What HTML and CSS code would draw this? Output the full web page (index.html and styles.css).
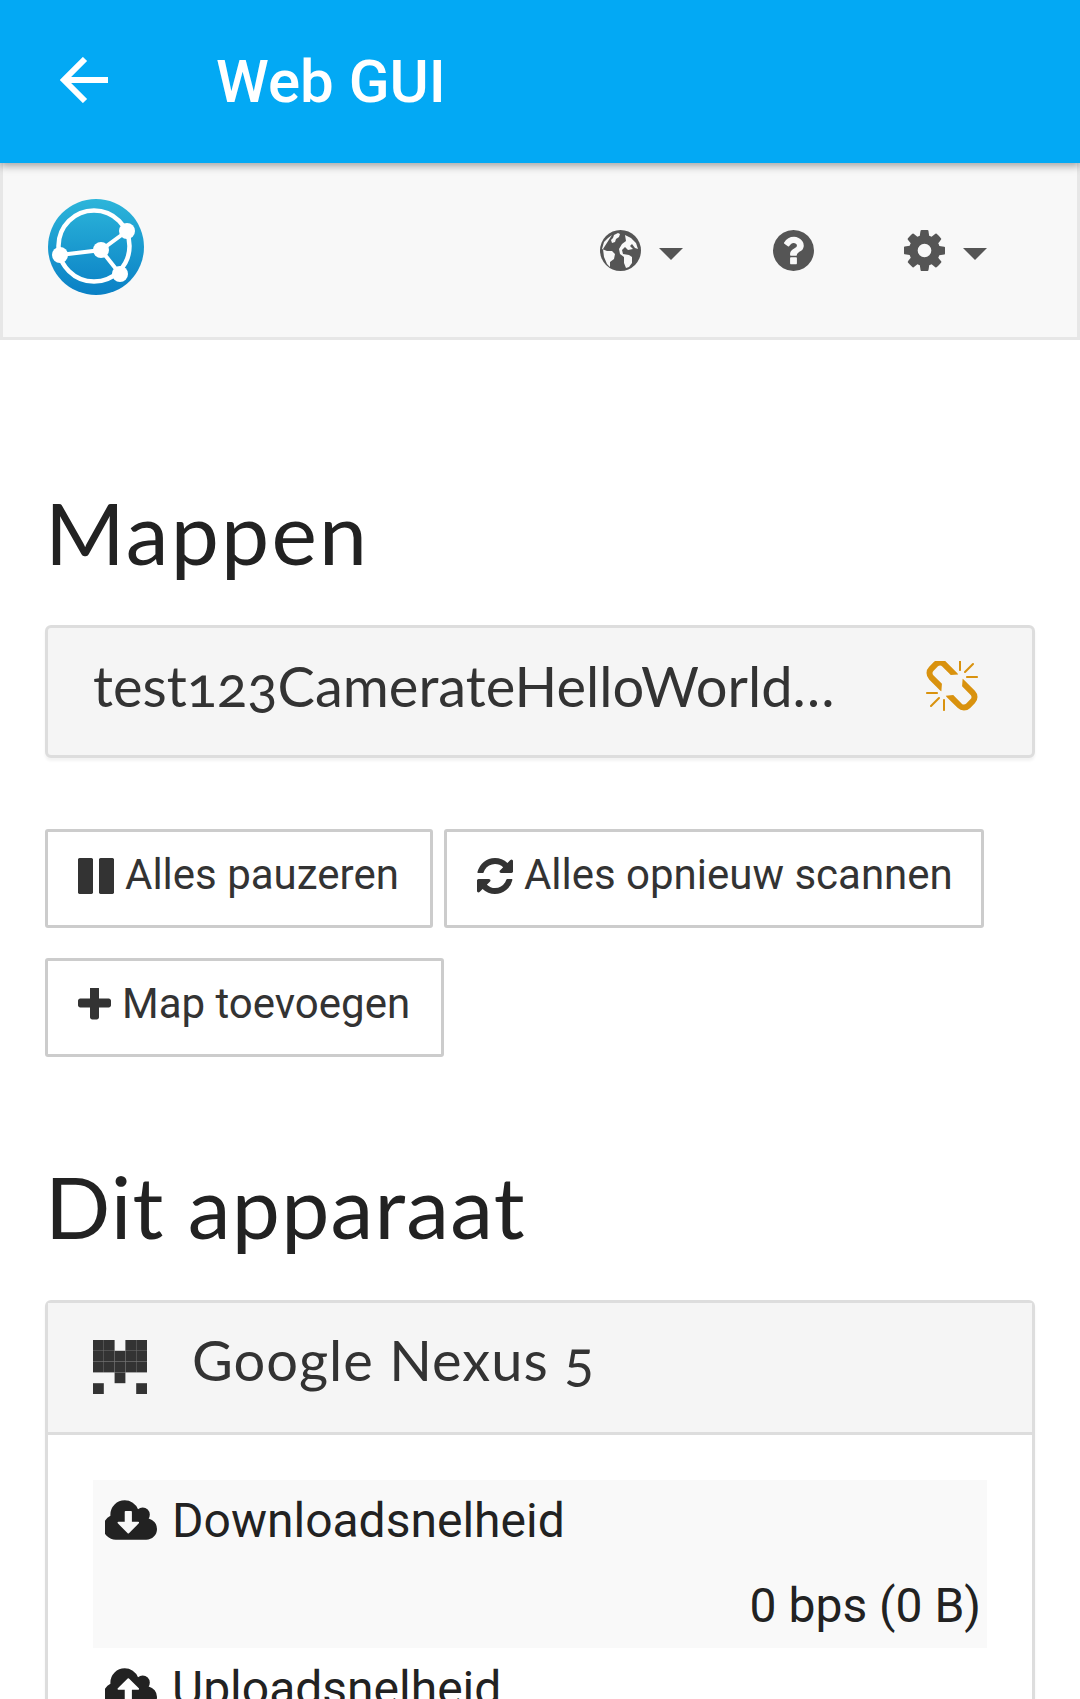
FILE: index.html
```html
<!DOCTYPE html>
<html lang="nl">
<head>
    <meta charset="UTF-8">
    <title>Web GUI</title>
    <link rel="stylesheet" href="styles.css">
</head>
<body>
    <div class="appbar">
        <svg class="back-icon" viewBox="0 0 48 46"><path d="M25 2 4 23l21 21M4 23h44" fill="none" stroke="#fff" stroke-width="6"/></svg>
        <span class="appbar-title">Web GUI</span>
    </div>

    <nav class="navbar">
        <svg class="logo" viewBox="0 0 96 96">
            <defs>
                <linearGradient id="logoFill" x1="0" y1="0" x2="0" y2="1">
                    <stop offset="0" stop-color="#2cb5da"/>
                    <stop offset="1" stop-color="#0a80c5"/>
                </linearGradient>
            </defs>
            <circle cx="48" cy="48" r="48" fill="url(#logoFill)"/>
            <circle cx="46" cy="47" r="35.500" fill="none" stroke="#fff" stroke-width="4.500"/>
            <path d="M12 56 53 51 79 32M53 51 72 75" fill="none" stroke="#fff" stroke-width="4"/>
            <circle cx="79" cy="32" r="8" fill="#fff"/>
            <circle cx="12" cy="56" r="8" fill="#fff"/>
            <circle cx="53" cy="51" r="8" fill="#fff"/>
            <circle cx="72" cy="75" r="8" fill="#fff"/>
        </svg>
        <div class="nav-items">
            <div class="nav-item globe-item">
                <svg class="nav-icon" viewBox="0 0 41 41">
                    <circle cx="20.500" cy="20.500" r="20.500" fill="#555"/>
                    <path d="M12 5 8 8 4 12 2 19l5 2h5l3 3-1 5-4 3v5l-3-3-3-7-1-8ZM14 5l4-2 2 1-1 3-3 2-1 3-3 1-1-3 2-2ZM25 5l6 3 5 5 2 6-3-1-3-4-2 2 3 3-5 1-3-3-3 3 1 4 6 1 3 2v6l-3 4-3 1-2-5v-6l-4-3-1-5 3-5 4-3Z" fill="#f8f8f8"/>
                </svg>
                <span class="caret"></span>
            </div>
            <div class="nav-item help-item">
                <svg class="nav-icon" viewBox="128 128 1536 1536"><path d="M1024 1376v-192q0-14-9-23t-23-9h-192q-14 0-23 9t-9 23v192q0 14 9 23t23 9h192q14 0 23-9t9-23zm256-672q0-88-55.500-163t-138.500-116-170-41q-243 0-371 213-15 24 8 42l132 100q7 6 19 6 16 0 25-12 53-68 86-92 34-24 86-24 48 0 85.500 26t37.500 59q0 38-20 61t-68 45q-63 28-115.500 86.500t-52.500 125.500v36q0 14 9 23t23 9h192q14 0 23-9t9-23q0-19 21.500-49.500t54.500-49.500q32-18 49-28.500t46-35 44.500-48 28-60.500 12.500-81zm384 192q0 209-103 385.500t-279.500 279.500-385.500 103-385.500-103-279.500-279.500-103-385.500 103-385.500 279.500-279.500 385.500-103 385.500 103 279.500 279.500 103 385.500z" fill="#555"/></svg>
            </div>
            <div class="nav-item">
                <svg class="nav-icon" viewBox="128 128 1536 1536"><path d="M1152 896q0-106-75-181t-181-75-181 75-75 181 75 181 181 75 181-75 75-181zm512-109v222q0 12-8 23t-20 13l-185 28q-19 54-39 91 35 50 107 138 10 12 10 25t-9 23q-27 37-99 108t-94 71q-12 0-26-9l-138-108q-44 23-91 38-16 136-29 186-7 28-36 28h-222q-14 0-24.500-8.500t-11.500-21.500l-28-184q-49-16-90-37l-141 107q-10 9-25 9-14 0-25-11-126-114-165-168-7-10-7-23 0-12 8-23 15-21 51-66.500t54-70.500q-27-50-41-99l-183-27q-13-2-21-12.500t-8-23.500v-222q0-12 8-23t19-13l186-28q14-46 39-92-40-57-107-138-10-12-10-24 0-10 9-23 26-36 98.500-107.500t94.500-71.500q13 0 26 10l138 107q44-23 91-38 16-136 29-186 7-28 36-28h222q14 0 24.500 8.500t11.500 21.500l28 184q49 16 90 37l142-107q9-9 24-9 13 0 25 10 129 119 165 170 7 8 7 22 0 12-8 23-15 21-51 66.500t-54 70.500q26 50 41 98l183 28q13 2 21 12.500t8 23.500z" fill="#555"/></svg>
                <span class="caret"></span>
            </div>
        </div>
    </nav>

    <main class="content">
        <h1 class="section-title folders-title">Mappen</h1>
        <div class="panel folder-panel">
            <span class="panel-name">test123CamerateHelloWorld…</span>
            <svg class="unlink-icon" viewBox="64 64 1664 1664"><path d="M503 1271l-256 256q-10 9-23 9-12 0-23-9-9-10-9-23t9-23l256-256q10-9 23-9t23 9q9 10 9 23t-9 23zm169 41v320q0 14-9 23t-23 9-23-9-9-23v-320q0-14 9-23t23-9 23 9 9 23zm-224-224q0 14-9 23t-23 9h-320q-14 0-23-9t-9-23 9-23 23-9h320q14 0 23 9t9 23zm1264 128q0 120-85 203l-147 146q-83 83-203 83-121 0-204-85l-334-335q-21-21-42-56l239-18 273 274q27 27 68 27.500t68-26.500l147-146q28-28 28-67 0-40-28-68l-274-275 18-239q35 21 56 42l336 336q84 86 84 204zm-617-724l-239 18-273-274q-28-28-68-28-39 0-68 27l-147 146q-28 28-28 67 0 40 28 68l274 274-18 240q-35-21-56-42l-336-336q-84-86-84-204 0-120 85-203l147-146q83-83 203-83 121 0 204 85l334 335q21 21 42 56zm633 84q0 14-9 23t-23 9h-320q-14 0-23-9t-9-23 9-23 23-9h320q14 0 23 9t9 23zm-544-544v320q0 14-9 23t-23 9-23-9-9-23v-320q0-14 9-23t23-9 23 9 9 23zm407 151l-256 256q-11 9-23 9t-23-9q-9-10-9-23t9-23l256-256q10-9 23-9t23 9q9 10 9 23t-9 23z" fill="#d9920e"/></svg>
        </div>

        <div class="button-group">
            <button class="btn">
                <svg class="btn-icon" viewBox="128 128 1536 1536"><path d="M1664 192v1408q0 26-19 45t-45 19h-512q-26 0-45-19t-19-45v-1408q0-26 19-45t45-19h512q26 0 45 19t19 45zm-896 0v1408q0 26-19 45t-45 19h-512q-26 0-45-19t-19-45v-1408q0-26 19-45t45-19h512q26 0 45 19t19 45z" fill="#333"/></svg>
                Alles pauzeren
            </button>
            <button class="btn btn-scan">
                <svg class="btn-icon" viewBox="128 128 1536 1536"><path d="M1639 1056q0 5-1 7-64 268-268 434.500t-478 166.500q-146 0-282.500-55t-243.500-157l-129 129q-19 19-45 19t-45-19-19-45v-448q0-26 19-45t45-19h448q26 0 45 19t19 45-19 45l-137 137q71 66 161 102t187 36q134 0 250-65t186-179q11-17 53-117 8-23 30-23h192q13 0 22.500 9.500t9.500 22.500zm25-800v448q0 26-19 45t-45 19h-448q-26 0-45-19t-19-45 19-45l138-138q-148-137-349-137-134 0-250 65t-186 179q-11 17-53 117-8 23-30 23h-199q-13 0-22.500-9.500t-9.500-22.500v-7q65-268 270-434.500t480-166.500q146 0 284 55.500t245 156.500l130-129q19-19 45-19t45 19 19 45z" fill="#333"/></svg>
                Alles opnieuw scannen
            </button>
            <button class="btn">
                <svg class="btn-icon plus-icon" viewBox="192 192 1408 1408"><path d="M1600 736v192q0 40-28 68t-68 28h-416v416q0 40-28 68t-68 28h-192q-40 0-68-28t-28-68v-416h-416q-40 0-68-28t-28-68v-192q0-40 28-68t68-28h416v-416q0-40 28-68t68-28h192q40 0 68 28t28 68v416h416q40 0 68 28t28 68z" fill="#333"/></svg>
                Map toevoegen
            </button>
        </div>

        <h1 class="section-title device-title">Dit apparaat</h1>
        <div class="panel device-panel">
            <div class="device-heading">
                <svg class="identicon" viewBox="0 0 5 5">
                    <rect x="0" y="0" width="1" height="1"/><rect x="1" y="0" width="1" height="1"/><rect x="3" y="0" width="1" height="1"/><rect x="4" y="0" width="1" height="1"/>
                    <rect x="0" y="1" width="1" height="1"/><rect x="1" y="1" width="1" height="1"/><rect x="2" y="1" width="1" height="1"/><rect x="3" y="1" width="1" height="1"/><rect x="4" y="1" width="1" height="1"/>
                    <rect x="0" y="2" width="1" height="1"/><rect x="1" y="2" width="1" height="1"/><rect x="2" y="2" width="1" height="1"/><rect x="3" y="2" width="1" height="1"/><rect x="4" y="2" width="1" height="1"/>
                    <rect x="2" y="3" width="1" height="1"/>
                    <rect x="0" y="4" width="1" height="1"/><rect x="4" y="4" width="1" height="1"/>
                </svg>
                <span class="panel-name device-name">Google Nexus 5</span>
            </div>
            <div class="device-body">
                <div class="stat-row stat-striped">
                    <div class="stat-label">
                        <svg class="cloud-icon" viewBox="0 128 1856 1408"><path d="M1216 928q0-14-9-23t-23-9h-224v-352q0-13-9.500-22.500t-22.500-9.500h-192q-13 0-22.500 9.500t-9.500 22.500v352h-224q-13 0-22.500 9.500t-9.500 22.500q0 14 9 23l352 352q9 9 23 9t23-9l351-351q10-12 10-24zm640 224q0 159-112.500 271.500t-271.500 112.500h-1088q-185 0-316.500-131.500t-131.500-316.500q0-130 70-240t188-165q-2-30-2-43 0-212 150-362t362-150q156 0 285.500 87t188.500 231q71-62 166-62 106 0 181 75t75 181q0 76-41 138 130 31 213.500 135.500t83.500 238.500z" fill="#222"/></svg>
                        Downloadsnelheid
                    </div>
                    <div class="stat-value">0 bps (0 B)</div>
                </div>
                <div class="stat-row">
                    <div class="stat-label">
                        <svg class="cloud-icon" viewBox="0 128 1856 1408"><path d="M1216 864q0-14-9-23l-352-352q-9-9-23-9t-23 9l-351 351q-10 12-10 24 0 14 9 23t23 9h224v352q0 13 9.500 22.500t22.500 9.500h192q13 0 22.500-9.500t9.500-22.500v-352h224q13 0 22.500-9.500t9.500-22.500zm640 288q0 159-112.500 271.500t-271.500 112.500h-1088q-185 0-316.500-131.500t-131.500-316.500q0-130 70-240t188-165q-2-30-2-43 0-212 150-362t362-150q156 0 285.500 87t188.500 231q71-62 166-62 106 0 181 75t75 181q0 76-41 138 130 31 213.500 135.500t83.500 238.500z" fill="#222"/></svg>
                        Uploadsnelheid
                    </div>
                </div>
            </div>
        </div>
    </main>
</body>
</html>
```

FILE: styles.css
```css
html, body {
    margin: 0;
    height: 100%;
    overflow: hidden;
}
body {
    font-family: Roboto, sans-serif;
    font-size: 42px;
    color: #333;
    background: #fff;
}
.appbar {
    position: relative;
    z-index: 1;
    display: flex;
    align-items: center;
    height: 163px;
    padding-left: 60px;
    box-sizing: border-box;
    background: #03a9f4;
    box-shadow: 0 3px 8px rgba(0,0,0,0.35);
}
.back-icon {
    width: 48px;
    height: 46px;
    margin-top: -4px;
}
.appbar-title {
    margin-left: 108px;
    font-size: 60px;
    font-weight: 500;
    color: #fff;
}
.navbar {
    display: flex;
    justify-content: space-between;
    align-items: center;
    height: 177px;
    box-sizing: border-box;
    padding: 0 90px 0 45px;
    border: 3px solid #e7e7e7;
    border-top: none;
    background: #f8f8f8;
}
.logo {
    width: 96px;
    height: 96px;
    margin-top: -6px;
}
.nav-items {
    display: flex;
    align-items: center;
}
.nav-item {
    display: flex;
    align-items: center;
}
.globe-item {
    margin-right: 90px;
}
.help-item {
    margin-right: 90px;
}
.nav-icon {
    width: 41px;
    height: 41px;
}
.caret {
    width: 0;
    height: 0;
    margin: 8px 0 0 18px;
    border-top: 12px solid #555;
    border-left: 12px solid transparent;
    border-right: 12px solid transparent;
}
.content {
    padding: 0 45px;
}
.section-title {
    margin: 0;
    font-family: Lato, sans-serif;
    font-size: 86px;
    font-weight: 400;
    line-height: 100px;
    color: #222;
}
.folders-title {
    padding-top: 142px;
    margin-bottom: 43px;
    letter-spacing: 2.200px;
}
.device-title {
    margin-top: 99px;
    margin-bottom: 44px;
    letter-spacing: 1.200px;
}
.panel {
    border: 3px solid #ddd;
    border-radius: 6px;
    box-shadow: 0 3px 3px rgba(0,0,0,0.05);
}
.panel-name {
    font-family: Lato, sans-serif;
    font-size: 56px;
    font-feature-settings: "onum";
}
.device-name {
    letter-spacing: 1px;
}
.folder-panel {
    display: flex;
    justify-content: space-between;
    align-items: center;
    height: 133px;
    box-sizing: border-box;
    padding: 0 54px 12px 45px;
    background: #f5f5f5;
}
.unlink-icon {
    width: 52px;
    height: 52px;
    margin-top: 2px;
}
.button-group {
    display: flex;
    flex-wrap: wrap;
    gap: 30px 11px;
    margin-top: 71px;
    width: 960px;
}
.btn {
    display: flex;
    align-items: center;
    height: 99px;
    padding: 0 31px 8px 30px;
    border: 3px solid #ccc;
    border-radius: 3px;
    background: #fff;
    color: #333;
    font-family: Roboto, sans-serif;
    font-size: 42px;
    white-space: nowrap;
}
.btn-scan {
    padding-right: 28px;
}
.btn-icon {
    width: 36px;
    height: 36px;
    margin: 2px 11px 0 0;
}
.plus-icon {
    width: 33px;
    height: 33px;
    margin-right: 11px;
}
.device-panel {
    height: 500px;
}
.device-heading {
    display: flex;
    align-items: center;
    height: 132px;
    box-sizing: border-box;
    padding: 0 45px 16px;
    border-bottom: 3px solid #ddd;
    background: #f5f5f5;
}
.identicon {
    width: 54px;
    height: 54px;
    margin: 15px 45px 0 0;
    fill: #333;
}
.device-body {
    padding: 45px;
    color: #222;
}
.stat-row {
    padding: 0 6px 0 7px;
}
.stat-striped {
    background: #f9f9f9;
}
.stat-label {
    display: flex;
    align-items: center;
    gap: 15px;
    height: 84px;
    box-sizing: border-box;
    padding: 0 0 4px 5px;
    font-size: 48px;
}
.stat-value {
    height: 84px;
    line-height: 84px;
    text-align: right;
    font-size: 48px;
}
.cloud-icon {
    width: 52px;
    height: 40px;
}
```
